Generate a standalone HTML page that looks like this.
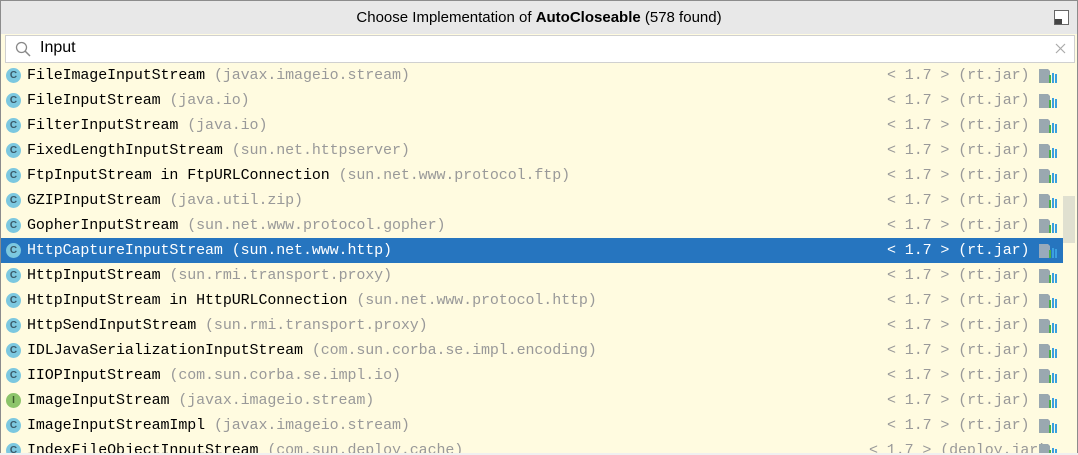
<!DOCTYPE html><html><head><style>
body{margin:0;width:1078px;height:455px;overflow:hidden;background:#fff;font-family:"Liberation Sans",sans-serif}
.frame{position:absolute;left:0;top:0;width:1076px;height:453px;border:1px solid #8c8c8c;background:#fffbe0;overflow:hidden}
.hdr{position:absolute;left:0;top:0;width:1076px;height:33px;background:#e8e8e8;text-align:center;font-size:15px;line-height:33px;color:#000}
.max{position:absolute;right:8px;top:9px;width:13px;height:13px;border:1px solid #666;background:#fff}
.max:after{content:"";position:absolute;left:0;bottom:0;width:7px;height:5px;background:#444}
.search{position:absolute;left:4px;top:34px;width:1068px;height:26px;background:#fff;border:1px solid #d0d0d0}
.search span{position:absolute;left:34px;top:3px;font-size:16px}
.row{position:absolute;left:0;width:1062px;height:25px;font-family:"Liberation Mono",monospace;font-size:15px;letter-spacing:-0.1px;line-height:25px;color:#000;white-space:pre}
.row .n{position:absolute;left:26px}
.g{color:#999}
.row .r{position:absolute;left:886px;color:#999}
.ic{position:absolute;left:5px;top:5px;width:15px;height:15px;border-radius:50%;background:#7cc8e0;font:bold 10px/15px "Liberation Sans",sans-serif;text-align:center;color:#3a5a6a;letter-spacing:0}
.sel{background:#2675bf;color:#fff}.sel .g,.sel .r{color:#fff}
.li{position:absolute;left:1038px;top:6px}
</style></head><body><div class="frame">
<div class="hdr">Choose Implementation of <b>AutoCloseable</b> (578 found)<div class="max"></div></div>
<div class="search"><svg style="position:absolute;left:9px;top:5px" width="16" height="16"><circle cx="6.5" cy="6.5" r="5" fill="none" stroke="#888" stroke-width="1.3"/><path d="M10 10l5 5" stroke="#888" stroke-width="1.5"/></svg><span>Input</span><svg style="position:absolute;right:8px;top:7px" width="11" height="11"><path d="M1 1l9 9M10 1l-9 9" stroke="#aaa" stroke-width="1.2"/></svg></div>
<div style="position:absolute;left:1062px;top:195px;width:12px;height:47px;background:#e0e0d0"></div>
<div id="rows"></div>
</div>
<script>
var d=[["FileImageInputStream","javax.imageio.stream"],["FileInputStream","java.io"],["FilterInputStream","java.io"],["FixedLengthInputStream","sun.net.httpserver"],["FtpInputStream in FtpURLConnection","sun.net.www.protocol.ftp"],["GZIPInputStream","java.util.zip"],["GopherInputStream","sun.net.www.protocol.gopher"],["HttpCaptureInputStream","sun.net.www.http"],["HttpInputStream","sun.rmi.transport.proxy"],["HttpInputStream in HttpURLConnection","sun.net.www.protocol.http"],["HttpSendInputStream","sun.rmi.transport.proxy"],["IDLJavaSerializationInputStream","com.sun.corba.se.impl.encoding"],["IIOPInputStream","com.sun.corba.se.impl.io"],["ImageInputStream","javax.imageio.stream"],["ImageInputStreamImpl","javax.imageio.stream"],["IndexFileObjectInputStream","com.sun.deploy.cache"]];
var h="";d.forEach(function(x,i){var t=62+25*i,s=i==7,I=i==13;
h+='<div class="row'+(s?' sel':'')+'" style="top:'+t+'px"><div class="ic" style="'+(I?'background:#8cc46a;color:#3a5a2a':'')+'">'+(I?'I':'C')+'</div><span class="n">'+x[0]+' <span class="g">('+x[1]+')</span></span><span class="r"'+(i==15?' style="left:868px"':'')+'>&lt; 1.7 &gt; ('+(i==15?'deploy.jar':'rt.jar')+')</span><svg class="li" width="20" height="14"><path d="M0 0h9l2 2v12H0z" fill="'+(s?'#9ab':'#9aa8b0')+'"/><rect x="10" y="6" width="2" height="8" fill="#4cb04c"/><rect x="13" y="4" width="2" height="10" fill="#3aa0e0"/><rect x="16" y="5" width="2" height="9" fill="#3aa0e0"/></svg></div>';});
document.getElementById("rows").innerHTML=h;
</script>
<div style="position:absolute;left:0;top:453px;width:1078px;height:2px;background:#f0f0f0"></div>
</body></html>
